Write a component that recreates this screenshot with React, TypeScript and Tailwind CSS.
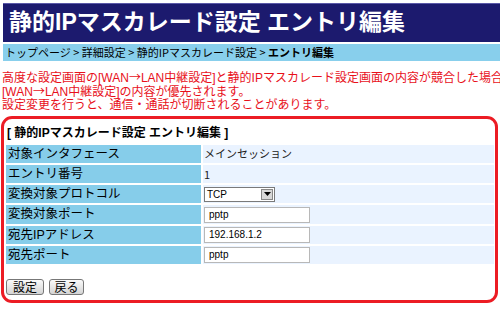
import React from "react";

const rows: { label: string; kind: "text" | "select" | "input"; value: string }[] = [
  { label: "対象インタフェース", kind: "text", value: "メインセッション" },
  { label: "エントリ番号", kind: "text", value: "1" },
  { label: "変換対象プロトコル", kind: "select", value: "TCP" },
  { label: "変換対象ポート", kind: "input", value: "pptp" },
  { label: "宛先IPアドレス", kind: "input", value: "192.168.1.2" },
  { label: "宛先ポート", kind: "input", value: "pptp" },
];

const mixed = '"Liberation Sans", "Noto Sans CJK JP", sans-serif';
const cjk = '"Noto Sans CJK JP", sans-serif';

function Arrow() {
  return (
    <span className="leading-[0]" style={{ fontFamily: cjk }}>
      →
    </span>
  );
}

export default function App() {
  return (
    <div
      className="w-[500px] h-[316px] bg-white overflow-hidden text-black"
      style={{ fontFamily: '"Noto Sans CJK JP", "Noto Sans", sans-serif' }}
    >
      <div
        className="ml-[3px] mt-[3px] h-[39px] bg-[#1c1a6e] border-t border-[#5a58a8] text-white text-[23px] font-bold leading-[37px] pl-[6px] whitespace-nowrap"
        style={{ fontFamily: mixed }}
      >
        静的IPマスカレード設定 エントリ編集
      </div>
      <div className="ml-[3px] mt-[2px] h-[17px] bg-[#88cfec] text-[11px] leading-[17px] pl-[2px] whitespace-nowrap">
        トップページ &gt; 詳細設定 &gt; 静的IPマスカレード設定 &gt; <span className="font-bold">エントリ編集</span>
      </div>
      <div
        className="mt-[11px] pl-[2px] text-[12px] leading-[13.5px] text-[#e8101a] whitespace-nowrap"
        style={{ fontFamily: mixed }}
      >
        <div className="h-[13.5px]">高度な設定画面の[WAN<Arrow />LAN中継設定]と静的IPマスカレード設定画面の内容が競合した場合</div>
        <div className="h-[13.5px]">[WAN<Arrow />LAN中継設定]の内容が優先されます。</div>
        <div className="h-[13.5px]">設定変更を行うと、通信・通話が切断されることがあります。</div>
      </div>
      <div className="ml-[1px] mt-[3px] w-[497px] h-[187px] border-[3px] border-[#ec1c24] rounded-[11px] pl-[2px] pr-[1px] pt-[6px]">
        <div className="text-[12px] font-bold leading-[16px] pl-[1px] whitespace-nowrap" style={{ fontFamily: mixed }}>
          [ 静的IPマスカレード設定 エントリ編集 ]
        </div>
        <div className="mt-[4px] flex flex-col gap-[2px]">
          {rows.map((r) => (
            <div key={r.label} className="flex gap-[2px] h-[18.3px]">
              <div
                className="w-[195px] bg-[#86cdea] text-[12.5px] leading-[18px] pl-[2px] whitespace-nowrap"
                style={{ fontFamily: mixed }}
              >
                {r.label}
              </div>
              <div className="flex-1 bg-[#eaf3ff] flex items-center pl-[1px] text-[11px] whitespace-nowrap">
                {r.kind === "text" && <span className="text-[#222]">{r.value}</span>}
                {r.kind === "select" && (
                  <div className="w-[71px] h-[15px] border border-[#7a7a7a] bg-white flex items-center">
                    <span className="flex-1 text-[10px] leading-[13px] pl-[2px]" style={{ fontFamily: '"Liberation Sans", sans-serif' }}>
                      {r.value}
                    </span>
                    <span className="w-[12px] h-[11px] mr-[1px] bg-[#d8d8d8] border border-[#888] flex items-center justify-center">
                      <svg width="7" height="4" viewBox="0 0 7 4">
                        <path d="M0 0 L7 0 L3.5 4 Z" fill="#000" />
                      </svg>
                    </span>
                  </div>
                )}
                {r.kind === "input" && (
                  <div
                    className="w-[106px] h-[16px] border border-[#b8b8b8] bg-white text-[10px] leading-[14px] pl-[4px]"
                    style={{ fontFamily: '"Liberation Sans", sans-serif' }}
                  >
                    {r.value}
                  </div>
                )}
              </div>
            </div>
          ))}
        </div>
        <div className="mt-[15px] flex gap-[5px] pl-[0px]">
          <div className="w-[38px] h-[16px] border border-[#777] rounded-[3px] bg-gradient-to-b from-[#fafafa] to-[#d4d4d4] text-[12px] leading-[14px] text-center">
            設定
          </div>
          <div className="w-[35px] h-[16px] border border-[#777] rounded-[3px] bg-gradient-to-b from-[#fafafa] to-[#d4d4d4] text-[12px] leading-[14px] text-center">
            戻る
          </div>
        </div>
      </div>
    </div>
  );
}
